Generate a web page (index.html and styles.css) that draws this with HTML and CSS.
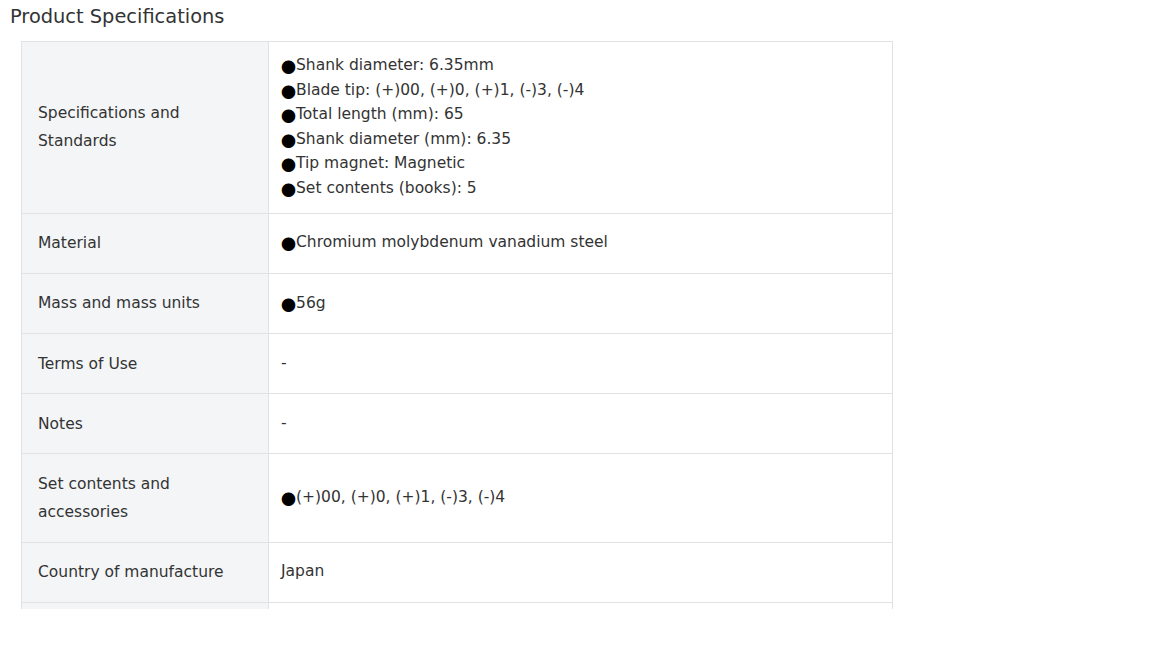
FILE: index.html
```html
<!DOCTYPE html>
<html lang="en">
<head>
<meta charset="utf-8">
<title>Product Specifications</title>
<link rel="stylesheet" href="styles.css">
</head>
<body>
<h2 class="title">Product Specifications</h2>
<div class="spec-wrap">
<table class="spec">
<tbody>
<tr>
<th>Specifications and Standards</th>
<td>
<div class="line"><span class="dot">●</span>Shank diameter: 6.35mm</div>
<div class="line"><span class="dot">●</span>Blade tip: (+)00, (+)0, (+)1, (-)3, (-)4</div>
<div class="line"><span class="dot">●</span>Total length (mm): 65</div>
<div class="line"><span class="dot">●</span>Shank diameter (mm): 6.35</div>
<div class="line"><span class="dot">●</span>Tip magnet: Magnetic</div>
<div class="line"><span class="dot">●</span>Set contents (books): 5</div>
</td>
</tr>
<tr>
<th>Material</th>
<td><div class="line"><span class="dot">●</span>Chromium molybdenum vanadium steel</div></td>
</tr>
<tr>
<th>Mass and mass units</th>
<td><div class="line"><span class="dot">●</span>56g</div></td>
</tr>
<tr>
<th>Terms of Use</th>
<td><div class="line">-</div></td>
</tr>
<tr>
<th>Notes</th>
<td><div class="line">-</div></td>
</tr>
<tr>
<th>Set contents and accessories</th>
<td><div class="line"><span class="dot">●</span>(+)00, (+)0, (+)1, (-)3, (-)4</div></td>
</tr>
<tr>
<th>Country of manufacture</th>
<td><div class="line">Japan</div></td>
</tr>
<tr class="row-cut">
<th></th>
<td></td>
</tr>
</tbody>
</table>
</div>
</body>
</html>
```

FILE: styles.css
```css
html, body {
  margin: 0;
  padding: 0;
  background: #ffffff;
}
body {
  font-family: "DejaVu Sans", "Noto Sans CJK JP", sans-serif;
  color: #333333;
}
.title {
  margin: 0;
  padding: 4px 0 0 10px;
  height: 41px;
  box-sizing: border-box;
  font-size: 19.4px;
  font-weight: 400;
  line-height: 26px;
  color: #333333;
}
.spec-wrap {
  margin-left: 21px;
  width: 872px;
  height: 568px;
  overflow: hidden;
}
.spec {
  width: 872px;
  border-collapse: collapse;
  font-size: 15.5px;
}
.spec th,
.spec td {
  border: 1px solid #e2e2e2;
  vertical-align: middle;
  text-align: left;
}
.spec th {
  width: 215px;
  padding: 15.6px 15px 15.6px 16px;
  background: #f4f5f7;
  font-weight: 400;
  line-height: 28px;
}
.spec td {
  padding: 11px 12px 12px 12px;
  line-height: 24.6px;
}
.row-cut th,
.row-cut td {
  height: 28px;
}
.line {
  white-space: nowrap;
}
.dot {
  font-family: "Noto Sans CJK JP", sans-serif;
  font-size: 15px;
  line-height: 0;
  color: #000000;
  vertical-align: -3px;
}
```
